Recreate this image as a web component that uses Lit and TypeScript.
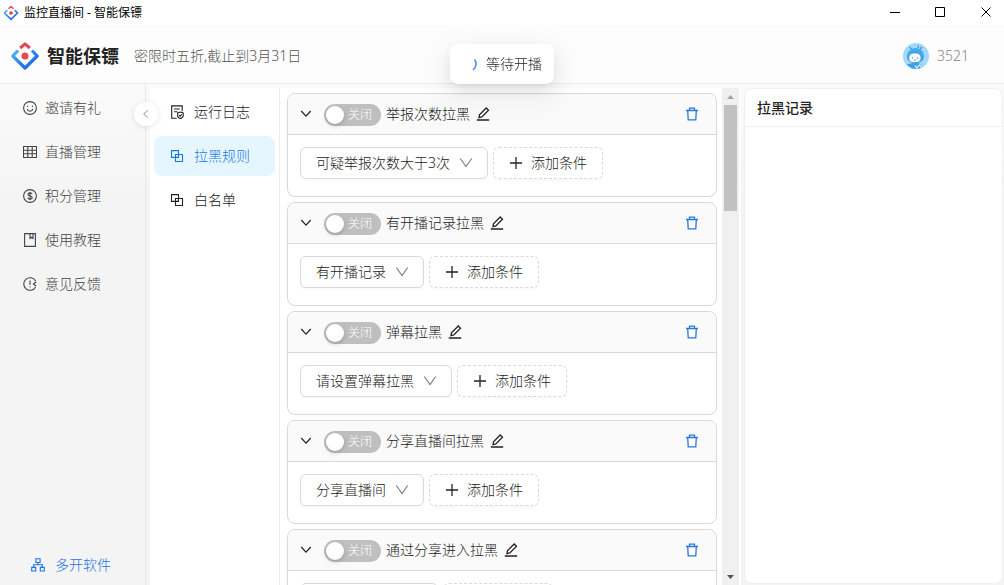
import { LitElement, html, svg, css, nothing } from "lit";
import { customElement, property } from "lit/decorators.js";
import { classMap } from "lit/directives/class-map.js";

const sharedText = css`
  *,
  *::before {
    box-sizing: border-box;
  }
  button,
  select,
  input {
    font: inherit;
    color: inherit;
    margin: 0;
  }
  button {
    padding: 0;
    border: 0;
    background: none;
    cursor: pointer;
  }
  a {
    color: inherit;
    text-decoration: none;
  }
`;

const glyphs = {
  smile: svg`<circle cx="7" cy="7" r="6.4"/><path d="M4.2 8c.4 1.5 1.500 2.300 2.800 2.300S9.400 9.500 9.800 8"/><path d="M4.600 4.700v1.200M9.400 4.700v1.200"/>`,
  table: svg`<path d="M.5 1.500h13v11h-13zM.5 5.200h13M.5 8.800h13M4.800 1.500v11M9.200 1.500v11"/>`,
  coin: svg`<circle cx="7" cy="7" r="6.400"/><path d="M9.100 5.200C8.900 4.300 8.100 3.900 7 3.900c-1.200 0-2 .6-2 1.500 0 2.100 4.200 1 4.200 3.200 0 .9-.9 1.500-2.200 1.500-1.200 0-2.100-.5-2.200-1.500M7 2.900v8.200"/>`,
  book: svg`<path d="M1.600.6h10.800v12.800H1.600zM7 .6v4.800l1.500-1.200L10 5.400V.6"/>`,
  feedback: svg`<path d="M12.600 4A6.300 6.300 0 1 0 12.600 10"/><path d="M7 3.500v4.600M7 9.400v1.200"/><path d="M13.200 4.800 10.500 7l2.600 2"/>`,
  log: svg`<path d="M12.200 6V.9H1.700v12.300h5.100M4.100 4h5.700M4.100 6.700h3.300"/><path d="M10.400 7.100l2.800.9v2.500c0 1.500-1.200 2.500-2.800 3-1.600-.5-2.800-1.500-2.800-3V8z"/><path d="m9.100 10.200 1 1 1.700-1.900"/>`,
  blocks: svg`<path d="M1.500 1.600h7v6.800h-7zM5.500 5.500h7v7h-7z"/>`,
  cluster: svg`<path d="M4.900.8h4.200v3.700H4.900zM.7 9.400h4v3.600h-4zM9.300 9.400h4v3.600h-4zM7 4.500v2.300M2.700 9.400V6.800h8.600v2.600"/>`,
  chevron: svg`<path d="m1.500 3.500 5.500 6 5.500-6" stroke-width="1.400"/>`,
  drop: svg`<path d="m1.300 2.500 5.700 8 5.700-8"/>`,
  back: svg`<path d="M9 2.500 4.500 7 9 11.500" stroke-width="1.400"/>`,
  edit: svg`<path d="M.8 13h12.400M3 10.600l.5-2.900L10.200 1l2.300 2.300-6.700 6.700z" stroke-width="1.300"/>`,
  trash: svg`<path d="M1 3.500h12M2.700 3.500l.5 9.400h7.600l.5-9.400M4.500 3.500V1.200h5v2.300" stroke-width="1.300"/>`,
  plus: svg`<path d="M7 1v12M1 7h12" stroke-width="1.300"/>`,
} as const;

type GlyphName = keyof typeof glyphs;

@customElement("line-icon")
class LineIcon extends LitElement {
  @property() name: GlyphName = "smile";

  static styles = css`
    :host {
      display: block;
      flex: none;
      width: 14px;
      height: 14px;
    }
    .glyph {
      display: block;
      width: 100%;
      height: 100%;
      fill: none;
      stroke: currentColor;
      stroke-width: 1.1;
    }
  `;

  render() {
    return html`<svg class="glyph" viewBox="0 0 14 14" aria-hidden="true">${glyphs[this.name]}</svg>`;
  }
}

@customElement("brand-mark")
class BrandMark extends LitElement {
  static styles = css`
    :host {
      display: block;
      flex: none;
    }
    .mark {
      display: block;
      width: 100%;
      height: 100%;
    }
  `;

  render() {
    return html`<svg class="mark" viewBox="0 0 30 30" fill="none" aria-hidden="true">
      <defs>
        <linearGradient id="blue" x1="0" y1="0" x2="1" y2="1">
          <stop offset="0" stop-color="#58b4ea" />
          <stop offset=".6" stop-color="#2577ee" />
          <stop offset="1" stop-color="#1c68e0" />
        </linearGradient>
      </defs>
      <path d="M8 9.500 2.800 15 15 27 27.200 15 22 9.500" stroke="url(#blue)" stroke-width="3.200" stroke-linejoin="round" />
      <path d="m10.200 7 4.800-4.200L19.800 7" stroke="#e64750" stroke-width="3" stroke-linejoin="round" />
      <circle cx="15" cy="15" r="3.500" fill="#e64750" />
    </svg>`;
  }
}

@customElement("rule-card")
class RuleCard extends LitElement {
  @property() name = "";
  @property() condition = "";

  static styles = [
    sharedText,
    css`
      :host {
        display: block;
        flex: none;
        border: 1px solid #d9d9d9;
        border-radius: 8px;
        background: #fff;
        overflow: hidden;
      }
      .head {
        display: flex;
        align-items: center;
        height: 41px;
        padding: 0 17px 0 12px;
        background: #fafafa;
        border-bottom: 1px solid #d9d9d9;
      }
      .fold {
        margin-right: 12px;
        color: #222;
      }
      .fold line-icon {
        width: 12px;
        height: 12px;
      }
      .toggle {
        position: relative;
        display: flex;
        align-items: center;
        width: 57px;
        height: 22px;
        margin: 2px 5px 0 0;
        color: #fff;
        font-size: 12px;
        line-height: 22px;
        cursor: pointer;
      }
      .switch {
        position: absolute;
        inset: 0;
        width: 100%;
        height: 100%;
        appearance: none;
        border-radius: 11px;
        background: #bfbfbf;
        cursor: pointer;
      }
      .switch::before {
        content: "";
        display: block;
        width: 18px;
        height: 18px;
        margin: 2px;
        border-radius: 9px;
        background: #fff;
        box-shadow: 0 2px 4px rgba(0, 35, 11, 0.2);
      }
      .switch:checked {
        background: #1677ff;
      }
      .switch:checked::before {
        margin-left: 37px;
      }
      .state {
        position: relative;
        padding-left: 24px;
        pointer-events: none;
      }
      .name {
        font-size: 14px;
        line-height: 22px;
        color: #222;
      }
      .edit {
        margin-left: 6px;
        color: #222;
      }
      .remove {
        margin-left: auto;
        color: #2878d8;
      }
      .body {
        display: flex;
        gap: 5px;
        padding: 12px 12px 17px;
      }
      .picker {
        display: grid;
        align-items: center;
      }
      .picker > * {
        grid-area: 1 / 1;
      }
      .picker line-icon {
        justify-self: end;
        margin-right: 15px;
        color: #777;
        pointer-events: none;
      }
      .select {
        appearance: none;
        height: 32px;
        padding: 0 37px 0 15px;
        border: 1px solid #d9d9d9;
        border-radius: 6px;
        background: #fff;
        box-shadow: 0 2px 0 rgba(0, 0, 0, 0.02);
        color: #222;
        font-size: 14px;
      }
      .add {
        display: flex;
        align-items: center;
        gap: 8px;
        height: 32px;
        padding: 0 15px;
        border: 1px dashed #d9d9d9;
        border-radius: 6px;
        box-shadow: 0 2px 0 rgba(0, 0, 0, 0.02);
        color: #222;
        font-size: 14px;
      }
    `,
  ];

  render() {
    return html`
      <div class="head">
        <button class="fold" aria-label="折叠"><line-icon name="chevron"></line-icon></button>
        <label class="toggle">
          <input class="switch" type="checkbox" role="switch" />
          <span class="state">关闭</span>
        </label>
        <span class="name">${this.name}</span>
        <button class="edit" aria-label="编辑"><line-icon name="edit"></line-icon></button>
        <button class="remove" aria-label="删除"><line-icon name="trash"></line-icon></button>
      </div>
      <div class="body">
        <label class="picker">
          <select class="select" aria-label=${this.name}>
            <option>${this.condition}</option>
          </select>
          <line-icon name="drop"></line-icon>
        </label>
        <button class="add"><line-icon name="plus"></line-icon>添加条件</button>
      </div>
    `;
  }
}

interface NavItem {
  icon: GlyphName;
  label: string;
  active?: boolean;
}

const mainNav: NavItem[] = [
  { icon: "smile", label: "邀请有礼" },
  { icon: "table", label: "直播管理" },
  { icon: "coin", label: "积分管理" },
  { icon: "book", label: "使用教程" },
  { icon: "feedback", label: "意见反馈" },
];

const subNav: NavItem[] = [
  { icon: "log", label: "运行日志" },
  { icon: "blocks", label: "拉黑规则", active: true },
  { icon: "blocks", label: "白名单" },
];

const rules = [
  { name: "举报次数拉黑", condition: "可疑举报次数大于3次" },
  { name: "有开播记录拉黑", condition: "有开播记录" },
  { name: "弹幕拉黑", condition: "请设置弹幕拉黑" },
  { name: "分享直播间拉黑", condition: "分享直播间" },
  { name: "通过分享进入拉黑", condition: "通过分享进入" },
];

@customElement("app-root")
class AppRoot extends LitElement {
  static styles = [
    sharedText,
    css`
      :host {
        display: flex;
        flex-direction: column;
        height: 100vh;
        overflow: hidden;
        background: linear-gradient(#fff, #f4f4f4 200px);
        color: #222;
        font-family: "Noto Sans", "Noto Sans CJK SC", sans-serif;
        font-size: 14px;
        font-weight: 300;
        line-height: 22px;
      }
      .titlebar {
        display: flex;
        flex: none;
        align-items: center;
        height: 25px;
        padding-left: 3px;
        background: #fff;
        color: #000;
        font-size: 12px;
        font-weight: 400;
      }
      .titlebar brand-mark {
        width: 16px;
        height: 16px;
        margin-right: 5px;
      }
      .window-buttons {
        display: flex;
        gap: 10px;
        margin-left: auto;
      }
      .window-button {
        display: grid;
        place-items: center;
        width: 36px;
        height: 25px;
      }
      .window-glyph {
        width: 11px;
        height: 11px;
        fill: none;
        stroke: #000;
      }
      .header {
        display: flex;
        flex: none;
        align-items: center;
        height: 59px;
        padding: 4px 35px 0 10px;
        border-bottom: 1px solid #ececec;
        background: #fdfdfd;
      }
      .header brand-mark {
        width: 30px;
        height: 30px;
      }
      .brand {
        margin: 0 15px 0 7px;
        font-size: 18px;
        font-weight: 700;
      }
      .notice {
        color: #555;
      }
      .account {
        display: flex;
        align-items: center;
        gap: 8px;
        margin-left: auto;
        color: #888;
      }
      .avatar {
        width: 26px;
        height: 26px;
      }
      .main {
        display: grid;
        flex: 1;
        grid-template-columns: 146px minmax(0, 595fr) minmax(0, 263fr);
        min-height: 0;
      }
      .sidebar {
        position: relative;
        display: flex;
        flex-direction: column;
        gap: 4px;
        padding: 4px 0 0;
        border-right: 1px solid #e8e8e8;
      }
      .side-link {
        display: flex;
        align-items: center;
        gap: 8px;
        height: 40px;
        padding-left: 23px;
        color: #444;
      }
      .side-link.multi {
        gap: 10px;
        margin-top: auto;
        padding-left: 31px;
        color: #1b72e4;
      }
      .collapse {
        position: absolute;
        top: 18px;
        right: -13px;
        z-index: 1;
        display: grid;
        place-items: center;
        width: 24px;
        height: 24px;
        border-radius: 12px;
        background: #fff;
        box-shadow: 0 1px 6px rgba(0, 0, 0, 0.1);
        color: #b0b0b0;
      }
      .collapse line-icon {
        width: 12px;
        height: 12px;
      }
      .workspace {
        display: grid;
        grid-template-columns: 130px minmax(0, 1fr) 17px;
        min-height: 0;
        margin: 4px 0 0 4px;
        padding-right: 2px;
        background: #fff;
      }
      .subnav {
        display: flex;
        flex-direction: column;
        gap: 4px;
        padding: 4px;
        border-right: 1px solid #ececec;
      }
      .sub-link {
        display: flex;
        align-items: center;
        gap: 10px;
        height: 40px;
        padding-left: 16px;
        border-radius: 8px;
      }
      .sub-link.active {
        background: #e6f6ff;
        color: #1677e0;
      }
      .rules {
        display: flex;
        flex-direction: column;
        gap: 5px;
        min-height: 0;
        padding: 5px 5px 5px 7px;
        overflow-y: auto;
        scrollbar-width: none;
      }
      .scrollbar {
        display: flex;
        flex-direction: column;
        min-height: 0;
        background: #f0f0f0;
      }
      .scroll-end {
        display: grid;
        flex: none;
        place-items: center;
        width: 17px;
        height: 17px;
        color: #505050;
      }
      .scroll-end.spent {
        color: #a3a3a3;
      }
      .scroll-arrow {
        width: 7px;
        height: 4px;
        fill: currentColor;
      }
      .scroll-track {
        flex: 1;
        min-height: 0;
        padding: 0 2px;
      }
      .scroll-thumb {
        height: 23%;
        background: #c1c1c1;
      }
      .records {
        margin: 4px 1px 1px 3px;
        border: 1px solid #f0f0f0;
        border-radius: 8px;
        background: #fff;
      }
      .records-title {
        margin: 0;
        padding: 8px 12px 7px;
        border-bottom: 1px solid #f0f0f0;
        font-size: 14px;
        font-weight: 500;
      }
      .toast {
        position: fixed;
        top: 44px;
        left: 50%;
        z-index: 2;
        display: flex;
        align-items: center;
        gap: 8px;
        padding: 9px 12px;
        border-radius: 8px;
        background: #fff;
        box-shadow:
          0 6px 16px rgba(0, 0, 0, 0.08),
          0 3px 6px -4px rgba(0, 0, 0, 0.12),
          0 9px 28px 8px rgba(0, 0, 0, 0.05);
        transform: translateX(-50%);
        white-space: nowrap;
      }
      .spinner {
        width: 16px;
        height: 16px;
        fill: none;
        stroke: #3f8df5;
        stroke-width: 1.5;
      }
    `,
  ];

  private navLink(item: NavItem, base: string) {
    return html`<a
      class=${classMap({ [base]: true, active: !!item.active })}
      href="#"
      aria-current=${item.active ? "page" : nothing}
      ><line-icon name=${item.icon}></line-icon>${item.label}</a
    >`;
  }

  render() {
    return html`
      <div class="titlebar">
        <brand-mark></brand-mark>
        <span>监控直播间 - 智能保镖</span>
        <div class="window-buttons">
          <button class="window-button" aria-label="最小化">
            <svg class="window-glyph" viewBox="0 0 11 11"><path d="M1 5.500h10" /></svg>
          </button>
          <button class="window-button" aria-label="最大化">
            <svg class="window-glyph" viewBox="0 0 11 11"><path d="M.5.5h9v9h-9z" /></svg>
          </button>
          <button class="window-button" aria-label="关闭">
            <svg class="window-glyph" viewBox="0 0 11 11"><path d="m.5.5 9 9m0-9-9 9" /></svg>
          </button>
        </div>
      </div>
      <header class="header">
        <brand-mark></brand-mark>
        <span class="brand">智能保镖</span>
        <span class="notice">密限时五折,截止到3月31日</span>
        <div class="account">
          <svg class="avatar" viewBox="0 0 26 26" aria-hidden="true">
            <circle cx="13" cy="13" r="13" fill="#a3d8fb" />
            <path d="M3.500 21.500 10 20h6l3 3-2 2.200a13 13 0 0 1-9-.2z" fill="#3aa3ea" />
            <path d="M12 22.500 13.500 25l3-3 2 2" fill="none" stroke="#e2f4ff" stroke-width="1.200" />
            <path d="m8.500 6-2-2M15 5l.5-2.500M17 6l2-2" stroke="#3b8fcd" stroke-width="1.200" />
            <path d="M4 13.500C4 8.500 8 5.500 12.500 5c5 0 8.500 3.500 8.500 8.500 0 4-3.500 6.500-8.500 6.500S4 17.500 4 13.500z" fill="#3eaaf0" />
            <path d="M5.800 15c0-3.300 2-5 6-5s6.200 1.700 6.200 5-2.400 4.600-6.200 4.600-6-1.400-6-4.600z" fill="#fff" stroke="#2178b8" stroke-width=".6" />
            <path d="M9.500 14.200v1.500M14.500 14.200v1.500M11 16.800q1 .8 2 0" fill="none" stroke="#3a7fb0" stroke-width=".8" />
          </svg>
          <span>3521</span>
        </div>
      </header>
      <main class="main">
        <nav class="sidebar">
          ${mainNav.map((item) => this.navLink(item, "side-link"))}
          <a class="side-link multi" href="#"><line-icon name="cluster"></line-icon>多开软件</a>
          <button class="collapse" aria-label="收起菜单"><line-icon name="back"></line-icon></button>
        </nav>
        <section class="workspace">
          <nav class="subnav">${subNav.map((item) => this.navLink(item, "sub-link"))}</nav>
          <div class="rules">
            ${rules.map((r) => html`<rule-card .name=${r.name} .condition=${r.condition}></rule-card>`)}
          </div>
          <div class="scrollbar" aria-hidden="true">
            <div class="scroll-end spent">
              <svg class="scroll-arrow" viewBox="0 0 7 4"><path d="M0 4 3.500 0 7 4z" /></svg>
            </div>
            <div class="scroll-track"><div class="scroll-thumb"></div></div>
            <div class="scroll-end">
              <svg class="scroll-arrow" viewBox="0 0 7 4"><path d="m0 0 3.500 4L7 0z" /></svg>
            </div>
          </div>
        </section>
        <aside class="records">
          <h2 class="records-title">拉黑记录</h2>
        </aside>
      </main>
      <div class="toast" role="status">
        <svg class="spinner" viewBox="0 0 16 16" aria-hidden="true"><path d="M12.500 3.500c2.500 3 2 7.500-1.500 10.500" /></svg>
        等待开播
      </div>
    `;
  }
}
